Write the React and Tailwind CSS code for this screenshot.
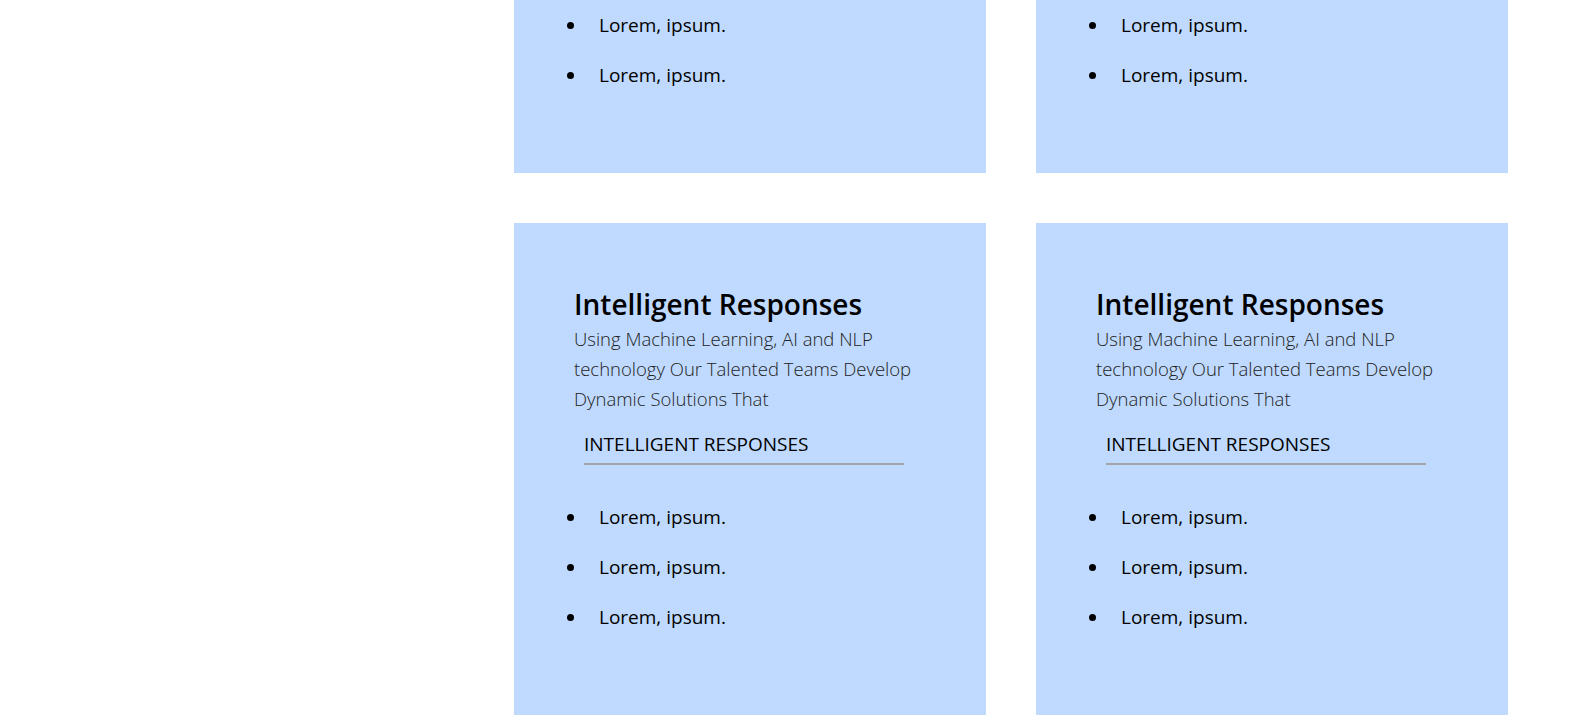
const ITEMS = ['Lorem, ipsum.', 'Lorem, ipsum.', 'Lorem, ipsum.']

function Card() {
  return (
    <div className="bg-[#bfdafe] pl-[60px] pr-[40px] pt-[61px] pb-[83px]">
      <h2 className="text-[28px] leading-[40px] font-semibold text-black">Intelligent Responses</h2>
      <p className="text-[18.5px] leading-[30px] font-light text-[#222]">
        Using Machine Learning, AI and NLP technology Our Talented Teams Develop Dynamic Solutions That
      </p>
      <h4 className="ml-[10px] mt-[15px] w-[320px] border-b-2 border-[#a3a3a8] pb-[4px] text-[19px] leading-[30px] text-black">
        INTELLIGENT RESPONSES
      </h4>
      <ul className="mt-[37px] flex flex-col gap-[20px]">
        {ITEMS.map((t, i) => (
          <li key={i} className="flex items-center text-[19px] leading-[30px] text-black">
            <span className="ml-[-7px] mr-[25px] h-[7px] w-[7px] rounded-full bg-black" />
            {t}
          </li>
        ))}
      </ul>
    </div>
  )
}

export default function App() {
  return (
    <div className="min-h-screen bg-white font-['Open_Sans',sans-serif] mt-[-319px]">
      <div className="ml-[514px] grid w-[994px] grid-cols-2 gap-[50px] pb-[14px]">
        <Card />
        <Card />
        <Card />
        <Card />
      </div>
    </div>
  )
}
